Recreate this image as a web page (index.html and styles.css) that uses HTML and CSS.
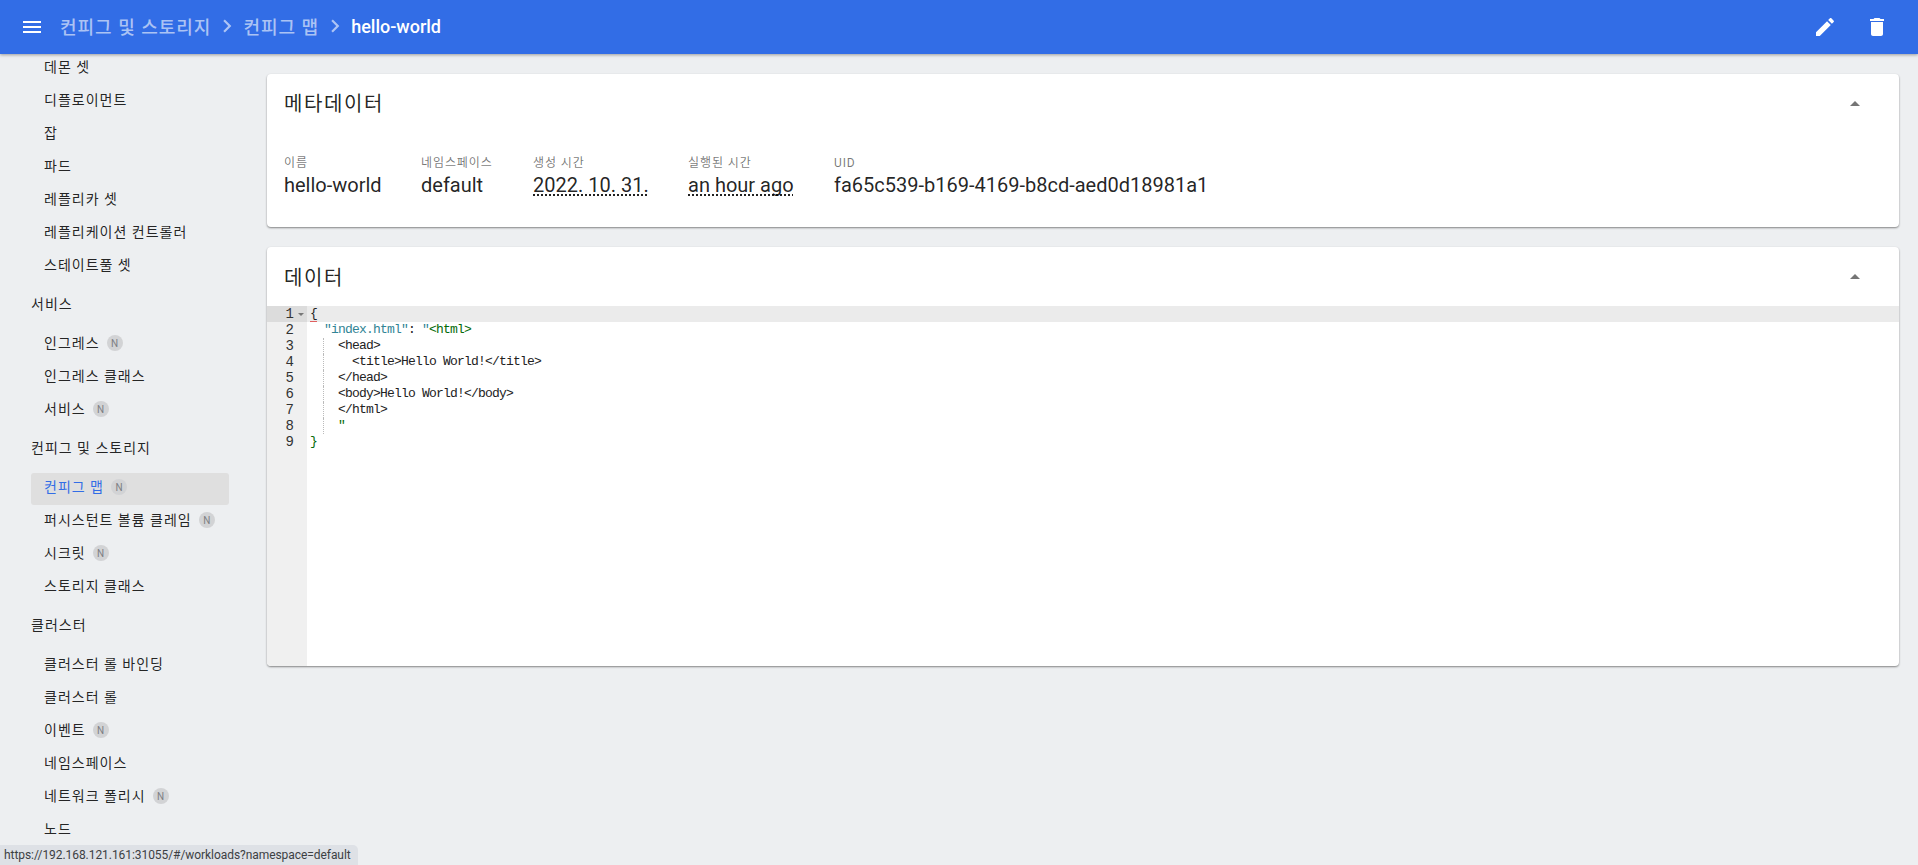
FILE: index.html
```html
<!DOCTYPE html>
<html lang="ko">
<head>
<meta charset="utf-8">
<title>hello-world</title>
<link rel="stylesheet" href="styles.css">
</head>
<body>
<header class="toolbar">
  <svg class="menu-icon" viewBox="0 0 24 24" width="24" height="24"><path d="M3 18h18v-2H3v2zm0-5h18v-2H3v2zm0-7v2h18V6H3z"/></svg>
  <nav class="crumbs">
    <span class="crumb">컨피그 및 스토리지</span>
    <svg class="chev" viewBox="0 0 24 24" width="26" height="26"><path d="M10 6L8.59 7.41 13.17 12l-4.58 4.59L10 18l6-6z"/></svg>
    <span class="crumb">컨피그 맵</span>
    <svg class="chev" viewBox="0 0 24 24" width="26" height="26"><path d="M10 6L8.59 7.41 13.17 12l-4.58 4.59L10 18l6-6z"/></svg>
    <span class="crumb-current">hello-world</span>
  </nav>
  <div class="actions">
    <svg viewBox="0 0 24 24" width="24" height="24"><path d="M3 17.25V21h3.75L17.81 9.94l-3.75-3.75L3 17.25zM20.71 7.04c.39-.39.39-1.02 0-1.41l-2.34-2.34c-.39-.39-1.02-.39-1.41 0l-1.83 1.83 3.75 3.75 1.83-1.83z"/></svg>
    <svg viewBox="0 0 24 24" width="24" height="24"><path d="M6 19c0 1.1.9 2 2 2h8c1.1 0 2-.9 2-2V7H6v12zM19 4h-3.5l-1-1h-5l-1 1H5v2h14V4z"/></svg>
  </div>
</header>
<div class="layout">
  <aside class="sidebar">
    <div class="item">데몬 셋</div>
    <div class="item">디플로이먼트</div>
    <div class="item">잡</div>
    <div class="item">파드</div>
    <div class="item">레플리카 셋</div>
    <div class="item">레플리케이션 컨트롤러</div>
    <div class="item">스테이트풀 셋</div>
    <div class="group">서비스</div>
    <div class="item">인그레스<span class="badge">N</span></div>
    <div class="item">인그레스 클래스</div>
    <div class="item">서비스<span class="badge">N</span></div>
    <div class="group">컨피그 및 스토리지</div>
    <div class="item active">컨피그 맵<span class="badge">N</span></div>
    <div class="item">퍼시스턴트 볼륨 클레임<span class="badge">N</span></div>
    <div class="item">시크릿<span class="badge">N</span></div>
    <div class="item">스토리지 클래스</div>
    <div class="group">클러스터</div>
    <div class="item">클러스터 롤 바인딩</div>
    <div class="item">클러스터 롤</div>
    <div class="item">이벤트<span class="badge">N</span></div>
    <div class="item">네임스페이스</div>
    <div class="item">네트워크 폴리시<span class="badge">N</span></div>
    <div class="item">노드</div>
  </aside>
  <main class="content">
    <section class="card">
      <div class="card-head meta-head">
        <h2>메타데이터</h2>
        <svg class="collapse" viewBox="0 0 24 24" width="24" height="24"><path d="M7 14l5-5 5 5z"/></svg>
      </div>
      <div class="meta">
        <div class="field name"><div class="label">이름</div><div class="value">hello-world</div></div>
        <div class="field ns"><div class="label">네임스페이스</div><div class="value">default</div></div>
        <div class="field created"><div class="label">생성 시간</div><div class="value"><span class="dotted">2022. 10. 31.</span></div></div>
        <div class="field age"><div class="label">실행된 시간</div><div class="value"><span class="dotted">an hour ago</span></div></div>
        <div class="field"><div class="label">UID</div><div class="value">fa65c539-b169-4169-b8cd-aed0d18981a1</div></div>
      </div>
    </section>
    <section class="card">
      <div class="card-head data-head">
        <h2>데이터</h2>
        <svg class="collapse" viewBox="0 0 24 24" width="24" height="24"><path d="M7 14l5-5 5 5z"/></svg>
      </div>
      <div class="editor">
        <div class="gutter">
          <div class="num current">1<svg class="fold" viewBox="0 0 6 3" width="6" height="3"><path d="M0 0h6L3 3z"/></svg></div>
          <div class="num">2</div>
          <div class="num">3</div>
          <div class="num">4</div>
          <div class="num">5</div>
          <div class="num">6</div>
          <div class="num">7</div>
          <div class="num">8</div>
          <div class="num">9</div>
        </div>
        <div class="code">
          <div class="line current"><span class="brace">{</span></div>
          <div class="line">  <span class="key">"index.html"</span>: <span class="key">"</span><span class="str">&lt;html&gt;</span></div>
          <div class="line">  <span class="guide">  </span>&lt;head&gt;</div>
          <div class="line">  <span class="guide">    </span>&lt;title&gt;Hello World!&lt;/title&gt;</div>
          <div class="line">  <span class="guide">  </span>&lt;/head&gt;</div>
          <div class="line">  <span class="guide">  </span>&lt;body&gt;Hello World!&lt;/body&gt;</div>
          <div class="line">  <span class="guide">  </span>&lt;/html&gt;</div>
          <div class="line">  <span class="guide">  </span><span class="str">"</span></div>
          <div class="line"><span class="str">}</span></div>
        </div>
      </div>
    </section>
  </main>
</div>
<div class="status">https://192.168.121.161:31055/#/workloads?namespace=default</div>
</body>
</html>
```

FILE: styles.css
```css
* { box-sizing: border-box; }
html, body { height: 100%; }
body {
  margin: 0;
  overflow: hidden;
  display: flex;
  flex-direction: column;
  background: #edeff1;
  color: rgba(0, 0, 0, .87);
  font-family: Roboto, "Noto Sans CJK KR", sans-serif;
}
.toolbar {
  position: relative;
  z-index: 2;
  flex: none;
  height: 54px;
  display: flex;
  align-items: center;
  padding: 0 29px 0 20px;
  background: #326de6;
  box-shadow: 0 1px 3px rgba(0, 0, 0, .35);
  color: #fff;
}
.toolbar svg { fill: currentColor; flex: none; }
.menu-icon { margin-right: 16px; }
.crumbs {
  flex: 1;
  display: flex;
  align-items: center;
  padding-bottom: 2px;
  font-size: 18px;
  font-weight: 500;
}
.crumb { color: rgba(255, 255, 255, .6); letter-spacing: 1px; }
.chev { color: rgba(255, 255, 255, .6); margin: 0 3px; }
.crumb-current { color: #fff; }
.actions { display: flex; gap: 28px; }
.layout { flex: 1; display: flex; min-height: 0; }
.sidebar {
  flex: none;
  width: 256px;
  margin-top: -1px;
  padding-left: 31px;
  font-size: 14px;
}
.item {
  height: 33px;
  width: 198px;
  display: flex;
  align-items: center;
  padding: 0 0 7px 13px;
  border-radius: 3px;
  white-space: nowrap;
  letter-spacing: 1px;
}
.group {
  height: 45px;
  display: flex;
  align-items: center;
  padding-bottom: 7px;
  white-space: nowrap;
  letter-spacing: 1px;
}
.active { background: #dfdfdf; color: #326de6; height: 32px; margin-bottom: 1px; padding-bottom: 6px; }
.badge {
  width: 16px;
  height: 16px;
  margin-left: 7px;
  border-radius: 50%;
  background: #d2d3d5;
  color: #7d7f84;
  font-size: 10px;
  letter-spacing: 0;
  display: flex;
  align-items: center;
  justify-content: center;
  transform: translateY(1px);
}
.content {
  flex: 1;
  min-width: 0;
  padding: 20px 19px 0 11px;
  display: flex;
  flex-direction: column;
  gap: 20px;
}
.card {
  background: #fff;
  border-radius: 4px;
  box-shadow: 0 1px 2px rgba(0, 0, 0, .45);
}
.card-head {
  height: 60px;
  display: flex;
  align-items: center;
  justify-content: space-between;
  padding: 0 32px 0 17px;
}
.meta-head h2 { padding-bottom: 3px; }
.data-head { height: 59px; }
.card-head h2 {
  margin: 0;
  font-size: 20px;
  font-weight: 400;
  letter-spacing: 1.6px;
}
.collapse { fill: rgba(0, 0, 0, .54); }
.meta {
  height: 93px;
  display: flex;
  padding: 20px 17px 0;
}
.field.name { width: 137px; }
.field.ns { width: 112px; }
.field.created { width: 155px; }
.field.age { width: 146px; }
.label {
  font-size: 12px;
  line-height: 18px;
  color: rgba(0, 0, 0, .54);
  letter-spacing: .9px;
}
.value {
  font-size: 20px;
  line-height: 26px;
}
.dotted {
  text-decoration: underline dotted 2px rgba(0, 0, 0, .87);
  text-underline-offset: 2px;
  text-decoration-skip-ink: none;
}
.editor {
  height: 360px;
  display: flex;
  font-family: "Liberation Mono", monospace;
  font-size: 13px;
  line-height: 16px;
  border-radius: 0 0 4px 4px;
  overflow: hidden;
}
.gutter {
  flex: none;
  width: 40px;
  background: #f0f0f0;
  color: #333;
  font-size: 14px;
}
.num {
  height: 16px;
  padding-right: 13px;
  text-align: right;
  display: flex;
  align-items: center;
  justify-content: flex-end;
  position: relative;
}
.num.current { background: #dcdcdc; }
.fold {
  position: absolute;
  right: 3px;
  top: 7px;
  fill: #777;
}
.code { flex: 1; min-width: 0; }
.line {
  height: 16px;
  padding-left: 3px;
  white-space: pre;
  letter-spacing: -.8px;
  color: #222;
}
.line.current { background: #ebebeb; }
.brace { box-shadow: 0 1px 0 #e06060; }
.key { color: #318495; }
.str { color: #036a07; }
.guide {
  display: inline-block;
  height: 16px;
  vertical-align: top;
  border-left: 1px dotted #bbb;
  margin-left: -1px;
}
.status {
  position: absolute;
  left: 0;
  bottom: 0;
  width: 358px;
  height: 20px;
  padding: 0 4px;
  background: #dee1e6;
  border-top-right-radius: 5px;
  color: #3c4043;
  font-family: Roboto, sans-serif;
  font-size: 12px;
  letter-spacing: -.06px;
  line-height: 21px;
  white-space: nowrap;
  overflow: hidden;
}
```
